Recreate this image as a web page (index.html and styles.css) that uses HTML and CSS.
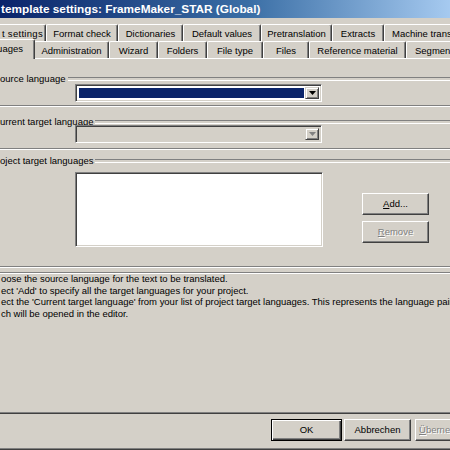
FILE: index.html
```html
<!DOCTYPE html>
<html>
<head>
<meta charset="utf-8">
<link rel="stylesheet" href="styles.css">
</head>
<body>
<div class="window">
  <div class="titlebar">template settings: FrameMaker_STAR (Global)</div>
  <div class="tabs">
    <div class="tabrow row1">
      <div class="tab r1t1">t settings</div>
      <div class="tab r1t2">Format check</div>
      <div class="tab r1t3">Dictionaries</div>
      <div class="tab r1t4">Default values</div>
      <div class="tab r1t5">Pretranslation</div>
      <div class="tab r1t6">Extracts</div>
      <div class="tab r1t7">Machine trans</div>
    </div>
    <div class="tabrow row2">
      <div class="tab active r2t1">guages</div>
      <div class="tab r2t2">Administration</div>
      <div class="tab r2t3">Wizard</div>
      <div class="tab r2t4">Folders</div>
      <div class="tab r2t5">File type</div>
      <div class="tab r2t6">Files</div>
      <div class="tab r2t7">Reference material</div>
      <div class="tab r2t8">Segmen</div>
    </div>
  </div>
  <div class="panel">
    <div class="legend g1"><span>ource language</span></div>
    <div class="combo">
      <div class="field selected"></div>
      <div class="drop"><svg width="7" height="4" viewBox="0 0 7 4"><polygon points="0,0 7,0 3.5,4" fill="#000"/></svg></div>
    </div>
    <div class="etch e1"></div>

    <div class="legend g2"><span>urrent target language</span></div>
    <div class="combo disabled c2">
      <div class="field"></div>
      <div class="drop"><svg width="7" height="4" viewBox="0 0 7 4"><polygon points="0,0 7,0 3.5,4" fill="#808080"/></svg></div>
    </div>
    <div class="etch e2"></div>

    <div class="legend g3"><span>oject target languages</span></div>
    <div class="listrow">
      <div class="listbox"></div>
      <div class="btncol">
        <div class="btn"><u>A</u>dd...</div>
        <div class="btn off"><u>R</u>emove</div>
      </div>
    </div>
    <div class="etch e3"></div>
    <div class="etch e4"></div>

    <div class="help">
      <div>oose the source language for the text to be translated.</div>
      <div>ect 'Add' to specify all the target languages for your project.</div>
      <div>ect the 'Current target language' from your list of project target languages. This represents the language pair</div>
      <div>ch will be opened in the editor.</div>
    </div>
  </div>
  <div class="footer">
    <div class="btn default">OK</div>
    <div class="btn cancel">Abbrechen</div>
    <div class="btn off apply"><u>Ü</u>bernehmen</div>
  </div>
</div>
</body>
</html>
```

FILE: styles.css
```css
* {
  box-sizing: border-box;
  margin: 0;
  padding: 0;
}

html, body {
  width: 450px;
  height: 450px;
  overflow: hidden;
}

body {
  font-family: "Liberation Sans", Arial, sans-serif;
  font-size: 9.5px;
  color: #000;
  background: #d4d0c8;
}

.window {
  width: 450px;
  height: 450px;
  overflow: hidden;
  display: flex;
  flex-direction: column;
  background: #d4d0c8;
  border-bottom: 1px solid #404040;
  box-shadow: inset 0 -1px #808080;
}

.titlebar {
  flex: none;
  height: 18px;
  line-height: 18px;
  padding-left: 1px;
  background: linear-gradient(to right, #0a246a 0%, #3a6ea5 55%, #a6caf0 100%);
  color: #fff;
  font-weight: bold;
  font-size: 11.8px;
  white-space: nowrap;
  overflow: hidden;
}

.tabs {
  flex: none;
  margin-top: 6px;
}

.tabrow {
  display: flex;
  height: 17px;
  white-space: nowrap;
}

.tab {
  flex: none;
  height: 17px;
  line-height: 17px;
  text-align: center;
  border-top: 1px solid #fff;
  border-left: 1px solid #fff;
  border-right: 1px solid #404040;
  box-shadow: inset -1px 0 #808080;
  border-radius: 2px 2px 0 0;
  overflow: hidden;
  background: #d4d0c8;
}

.row2 .tab {
  line-height: 18px;
}

.r1t1 { margin-left: -10px; width: 56px; text-align: right; padding-right: 2px; letter-spacing: 0.3px; }
.r1t2 { width: 72px; }
.r1t3 { width: 65px; }
.r1t4 { width: 78px; }
.r1t5 { width: 71px; }
.r1t6 { width: 52px; }
.r1t7 { width: 120px; text-align: left; padding-left: 7px; }

.r2t1 { margin-left: -12px; width: 47px; margin-right: -1px; text-align: right; padding-right: 11px; }
.r2t2 { width: 75px; }
.r2t3 { width: 49px; }
.r2t4 { width: 49px; }
.r2t5 { width: 56px; }
.r2t6 { width: 46px; }
.r2t7 { width: 97px; }
.r2t8 { width: 100px; text-align: left; padding-left: 8px; }

.row2 .tab.active {
  position: relative;
  z-index: 2;
  margin-top: -2px;
  height: 20px;
  line-height: 17px;
}

.panel {
  flex: none;
  height: 356px;
  border-top: 1px solid #fff;
  border-bottom: 1px solid #404040;
  box-shadow: inset 0 -1px #808080;
  padding-top: 14px;
  display: flex;
  flex-direction: column;
}

.legend {
  display: flex;
  height: 11px;
  line-height: 12px;
  white-space: nowrap;
}

.legend::after {
  content: "";
  flex: 1;
  height: 2px;
  margin-top: 4px;
  margin-left: 2px;
  border-top: 1px solid #808080;
  border-bottom: 1px solid #fff;
}

.g2 { margin-top: 9px; }
.g3 { margin-top: 5px; }

.etch {
  height: 2px;
  border-top: 1px solid #808080;
  border-bottom: 1px solid #fff;
}

.e1 { margin-top: 3px; }
.e2 { margin-top: 5px; }
.e3 { margin-top: 19px; }
.e4 { margin-top: 4px; }

.combo {
  display: flex;
  width: 247px;
  height: 18px;
  margin-left: 75px;
  padding: 2px;
  background: #fff;
  border: 1px solid;
  border-color: #808080 #fff #fff #808080;
  box-shadow: inset 1px 1px #404040, inset -1px -1px #d4d0c8;
}

.combo.c2 { margin-top: -2px; }

.combo.disabled {
  background: #d4d0c8;
}

.field {
  flex: 1;
  margin: 1px;
}

.field.selected {
  background: #0a246a;
}

.drop {
  width: 14px;
  display: flex;
  align-items: center;
  justify-content: center;
  background: #d4d0c8;
  border: 1px solid;
  border-color: #d4d0c8 #404040 #404040 #d4d0c8;
  box-shadow: inset 1px 1px #fff, inset -1px -1px #808080;
}

.drop svg { display: block; }

.listrow {
  display: flex;
  margin-left: 75px;
  margin-top: 6px;
}

.listbox {
  width: 248px;
  height: 75px;
  background: #fff;
  border: 1px solid;
  border-color: #808080 #fff #fff #808080;
  box-shadow: inset 1px 1px #404040, inset -1px -1px #d4d0c8;
}

.btncol {
  display: flex;
  flex-direction: column;
  gap: 6px;
  margin-left: 39px;
  margin-top: 21px;
}

.btn {
  flex: none;
  width: 67px;
  height: 22px;
  line-height: 20px;
  text-align: center;
  white-space: nowrap;
  overflow: hidden;
  background: #d4d0c8;
  border: 1px solid;
  border-color: #fff #404040 #404040 #fff;
  box-shadow: inset -1px -1px #808080;
}

.btn.off {
  color: #808080;
  text-shadow: 1px 1px #fff;
}

.help {
  margin-top: -1px;
  line-height: 11.7px;
  white-space: nowrap;
  padding-left: 1px;
  letter-spacing: -0.02px;
}

.footer {
  flex: none;
  display: flex;
  margin-top: 5px;
  padding-left: 271px;
}

.btn.default {
  width: 71px;
  border: 1px solid #000;
  box-shadow: inset 1px 1px #fff, inset -1px -1px #404040, inset -2px -2px #808080;
}

.btn.cancel { margin-left: 2px; }

.btn.apply {
  margin-left: 4px;
  text-align: left;
  padding-left: 3px;
}
```
